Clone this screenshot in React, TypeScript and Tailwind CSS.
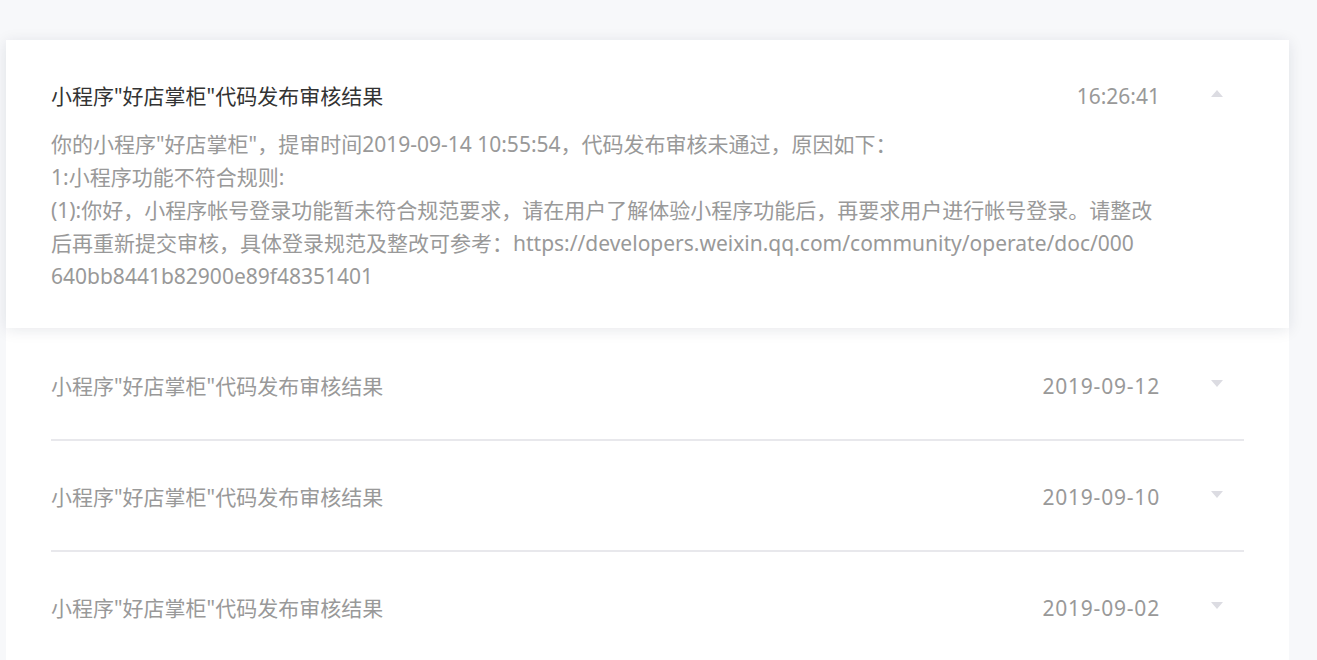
import React from "react";

const FONT = { fontFamily: '"Noto Sans", "Noto Sans CJK SC", sans-serif' };

const rows = [
  { title: '小程序"好店掌柜"代码发布审核结果', date: "2019-09-12" },
  { title: '小程序"好店掌柜"代码发布审核结果', date: "2019-09-10" },
  { title: '小程序"好店掌柜"代码发布审核结果', date: "2019-09-02" },
];

function Caret({ up }: { up?: boolean }) {
  return (
    <svg width="12" height="7" viewBox="0 0 12 7" className="block">
      {up ? <path d="M6 0 L12 7 L0 7 Z" fill="#dcdce2" /> : <path d="M0 0 L12 0 L6 7 Z" fill="#dcdce2" />}
    </svg>
  );
}

export default function App() {
  return (
    <div className="min-h-[660px] bg-[#f7f8fa] pt-[40px] pl-[6px] overflow-hidden" style={FONT}>
      <div className="w-[1283px] bg-white min-h-[620px]">
        {/* expanded notice */}
        <div className="relative z-10 bg-white shadow-[0_2px_14px_rgba(20,30,60,0.10)] px-[45px] pt-[40px] pb-[35px] flex">
          <div className="flex-1 min-w-0">
            <div className="flex justify-between text-[21px] leading-[33px]">
              <span className="text-[#333]">小程序"好店掌柜"代码发布审核结果</span>
              <span className="text-[#999]">16:26:41</span>
            </div>
            <div className="mt-[15px] text-[21px] leading-[33px] text-[#999] break-all">
              <p>你的小程序"好店掌柜"，提审时间2019-09-14 10:55:54，代码发布审核未通过，原因如下：</p>
              <p>1:小程序功能不符合规则:</p>
              <p>
                (1):你好，小程序帐号登录功能暂未符合规范要求，请在用户了解体验小程序功能后，再要求用户进行帐号登录。请整改后再重新提交审核，具体登录规范及整改可参考：https://developers.weixin.qq.com/community/operate/doc/000
                <br />
                640bb8441b82900e89f48351401
              </p>
            </div>
          </div>
          <div className="w-[84px] flex justify-end pr-[21px] pt-[10px]">
            <Caret up />
          </div>
        </div>

        {/* collapsed notices */}
        <div className="px-[45px]">
          {rows.map((r, i) => (
            <div
              key={i}
              className={`flex items-start ${i === 0 ? "h-[113px] pt-[42px]" : "h-[111px] pt-[40px]"} ${
                i < rows.length - 1 ? "border-b-2 border-[#e8e8ec]" : ""
              }`}
            >
              <div className="flex-1 flex justify-between text-[21px] leading-[33px] text-[#999]">
                <span>{r.title}</span>
                <span className="tracking-[0.8px]">{r.date}</span>
              </div>
              <div className="w-[84px] flex justify-end pr-[21px] pt-[10px]">
                <Caret />
              </div>
            </div>
          ))}
        </div>
      </div>
    </div>
  );
}
